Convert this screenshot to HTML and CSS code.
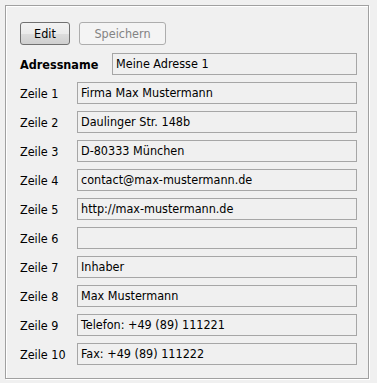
FILE: index.html
```
<!DOCTYPE html>
<html>
<head>
<meta charset="utf-8">
<link rel="stylesheet" href="styles.css">
</head>
<body>
<div class="frame">
  <div class="toolbar">
    <button class="btn">Edit</button>
    <button class="btn btn-disabled">Speichern</button>
  </div>
  <div class="row">
    <span class="label label-wide">Adressname</span>
    <div class="field">Meine Adresse 1</div>
  </div>
  <div class="row"><span class="label">Zeile 1</span><div class="field">Firma Max Mustermann</div></div>
  <div class="row"><span class="label">Zeile 2</span><div class="field">Daulinger Str. 148b</div></div>
  <div class="row"><span class="label">Zeile 3</span><div class="field">D-80333 München</div></div>
  <div class="row"><span class="label">Zeile 4</span><div class="field">contact@max-mustermann.de</div></div>
  <div class="row"><span class="label">Zeile 5</span><div class="field">http://max-mustermann.de</div></div>
  <div class="row"><span class="label">Zeile 6</span><div class="field"></div></div>
  <div class="row"><span class="label">Zeile 7</span><div class="field">Inhaber</div></div>
  <div class="row"><span class="label">Zeile 8</span><div class="field">Max Mustermann</div></div>
  <div class="row"><span class="label">Zeile 9</span><div class="field">Telefon: +49 (89) 111221</div></div>
  <div class="row"><span class="label">Zeile 10</span><div class="field">Fax: +49 (89) 111222</div></div>
</div>
</body>
</html>
```
FILE: styles.css
```
html, body {
  margin: 0;
  padding: 0;
  background: #f0f0f0;
}
body {
  font-family: "DejaVu Sans Condensed", "DejaVu Sans", sans-serif;
  font-size: 12.5px;
  color: #000;
  width: 377px;
  height: 383px;
  overflow: hidden;
}
.frame {
  box-sizing: border-box;
  margin: 5px 0 0 5px;
  width: 364px;
  height: 374px;
  border: 1px solid #a0a0a0;
  box-shadow: inset 1px 1px 0 #ffffff, 1px 1px 0 #ffffff;
  padding: 16px 11px 0 14px;
  display: flex;
  flex-direction: column;
  gap: 7px;
}
.toolbar {
  display: flex;
  gap: 9px;
  height: 23px;
  margin-bottom: 1px;
}
.btn {
  box-sizing: border-box;
  height: 23px;
  width: 50px;
  padding: 0;
  font-family: inherit;
  font-size: 12.5px;
  color: #000;
  border: 1px solid #707070;
  border-radius: 3px;
  background: linear-gradient(#f2f2f2 0%, #ebebeb 50%, #dddddd 51%, #cfcfcf 100%);
}
.btn-disabled {
  width: 87px;
  color: #838383;
  border-color: #adadad;
  background: #f4f4f4;
}
.row {
  display: flex;
  align-items: center;
  height: 22px;
}
.label {
  width: 57px;
  flex: none;
}
.label-wide {
  width: 92px;
  font-weight: bold;
}
.field {
  box-sizing: border-box;
  flex: 1;
  height: 22px;
  border: 1px solid #a6a6a6;
  background: #f0f0f0;
  padding: 0 3px;
  line-height: 20px;
  white-space: nowrap;
  overflow: hidden;
}
```
